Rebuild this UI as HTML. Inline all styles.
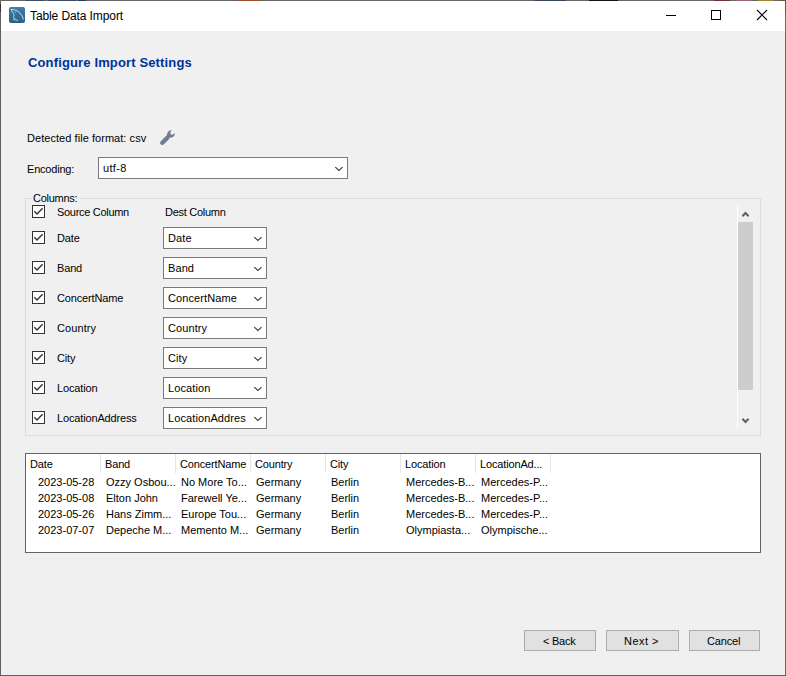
<!DOCTYPE html>
<html><head><meta charset="utf-8"><style>
html,body{margin:0;padding:0;width:786px;height:676px;overflow:hidden;background:#F0F0F0;}
body{position:relative;font-family:"Liberation Sans",sans-serif;font-size:11px;color:#000;}
.a{position:absolute;}
.t{position:absolute;white-space:nowrap;line-height:13px;font-size:11px;letter-spacing:-0.15px;}
.d{letter-spacing:0px;}
.cb{position:absolute;width:13px;height:13px;}
.combo{position:absolute;background:#fff;border:1px solid #7A7A7A;box-sizing:border-box;overflow:hidden;}
.combo .v{position:absolute;left:4px;white-space:nowrap;line-height:13px;letter-spacing:0.1px;}
.chev{position:absolute;width:9px;height:5px;overflow:visible;}
.btn{position:absolute;top:630px;height:21px;background:#E1E1E1;border:1px solid #ADADAD;box-sizing:border-box;text-align:center;line-height:13px;}
.hd{position:absolute;top:454px;height:19px;border-right:1px solid #E5E5E5;box-sizing:border-box;}
</style></head><body>
<!-- window frame -->
<div class="a" style="left:0;top:0;width:1px;height:676px;background:#5B5F66"></div>
<div class="a" style="left:785px;top:0;width:1px;height:676px;background:#6A6A6A"></div>
<div class="a" style="left:0;top:675px;width:786px;height:1px;background:#5A5D62"></div>
<div class="a" style="left:0;top:0;width:786px;height:1px;background:#666666"></div>
<div class="a" style="left:26px;top:0;width:18px;height:1px;background:#3A4C64"></div>
<div class="a" style="left:48px;top:0;width:28px;height:1px;background:#3A4C64"></div>
<div class="a" style="left:78px;top:0;width:8px;height:1px;background:#1F3D62"></div>
<div class="a" style="left:237px;top:0;width:22px;height:1px;background:#9A4A24"></div>
<div class="a" style="left:535px;top:0;width:31px;height:1px;background:#34445C"></div>
<div class="a" style="left:589px;top:0;width:29px;height:1px;background:#111111"></div>
<div class="a" style="left:714px;top:0;width:16px;height:1px;background:#6A3434"></div>
<div class="a" style="left:737px;top:0;width:15px;height:1px;background:#A06080"></div>
<div class="a" style="left:758px;top:0;width:16px;height:1px;background:#A08428"></div>
<div class="a" style="left:0;top:4px;width:1px;height:8px;background:#3D2E33"></div>
<div class="a" style="left:780px;top:0;width:6px;height:1px;background:#5E5640"></div>
<div class="a" style="left:785px;top:0;width:1px;height:14px;background:#5E5640"></div>
<!-- title bar -->
<div class="a" style="left:1px;top:1px;width:784px;height:30px;background:#FFFFFF"></div>
<div class="a" style="left:9px;top:7px;width:16px;height:16px;border-radius:2px;background:linear-gradient(#3F7FAA,#2A5F86)"></div>
<svg class="a" style="left:9px;top:7px" width="16" height="16" viewBox="0 0 16 16"><g stroke="#D6E2EC" stroke-width="0.9" fill="none" stroke-linecap="round" stroke-linejoin="round"><path d="M2.3 2.5C5 2.2 8.5 3.6 11 6C12.6 7.8 13.8 10 14.4 12.3"/><path d="M2.3 2.5C2.6 3.6 3.2 4.6 3.8 5.6C4.6 7 5.2 8 5 9C4.6 10.2 4.5 11.5 5.2 12.8L5.6 13.3"/><path d="M5.4 12.6C5.9 11.7 6.4 11.5 6.7 12.3C7 13 7.8 13.3 8.5 13.4"/></g><circle cx="6.3" cy="5.3" r="0.55" fill="#C8D6E2"/></svg>
<div class="t" style="left:30px;top:9px;font-size:12px;line-height:14px;letter-spacing:-0.1px">Table Data Import</div>
<!-- window controls -->
<div class="a" style="left:666px;top:15px;width:10px;height:1px;background:#000"></div>
<div class="a" style="left:711px;top:10px;width:10px;height:10px;border:1px solid #000;box-sizing:border-box"></div>
<svg class="a" style="left:756px;top:9px" width="12" height="12" viewBox="0 0 12 12"><path d="M1 1L11 11M11 1L1 11" stroke="#000" stroke-width="1.1" fill="none"/></svg>
<!-- heading -->
<div class="t" style="left:28px;top:55px;font-size:13px;line-height:15px;font-weight:bold;color:#003399;letter-spacing:0.14px">Configure Import Settings</div>
<!-- detected format -->
<div class="t" style="left:27px;top:132px;letter-spacing:0.05px">Detected file format: csv</div>
<svg class="a" style="left:159px;top:129px" width="18" height="17" viewBox="0 0 18 17"><path d="M1.8 12.2L7 7C7.7 6.3 8.2 6 8.2 5C8.3 3 9.9 1.4 12.8 1.1L11.4 3.1C11.1 4.3 11.6 5.3 12.6 5.7C13.6 6 14.7 5.5 15.8 4.1C16.1 5.9 15.3 7.6 13.4 8.3C12 8.8 10.8 8.6 10.2 9.3L10 10.2L4.6 15.5C3.8 16.3 2.4 16.2 1.6 15.3C0.9 14.5 1 13 1.8 12.2Z" fill="#707D8C"/></svg>
<!-- encoding -->
<div class="t" style="left:27px;top:163px;letter-spacing:-0.2px">Encoding:</div>
<div class="combo" style="left:98px;top:157px;width:250px;height:22px"><div class="v" style="top:4px;letter-spacing:0.35px">utf-8</div>
<svg class="chev" style="left:236px;top:8px" viewBox="0 0 9 5"><path d="M0.3 1.1L3.9 4.4L7.6 1.1" stroke="#3C3C3C" stroke-width="1.15" fill="none"/></svg></div>


<!-- columns group -->
<div class="a" style="left:25px;top:198px;width:736px;height:238px;border:1px solid #DCDCDC;box-sizing:border-box"></div>
<div class="t" style="left:32px;top:192px;padding:0 3px 0 1px;background:#F0F0F0;letter-spacing:-0.28px">Columns:</div>
<svg class="cb" style="left:32px;top:205px" viewBox="0 0 13 13"><rect x="0.5" y="0.5" width="12" height="12" fill="#fff" stroke="#333"/><path d="M2.3 6.3L5 9L10.6 3.3" stroke="#333" stroke-width="1.4" fill="none"/></svg>
<div class="t" style="left:57px;top:206px;letter-spacing:-0.3px">Source Column</div>
<div class="t" style="left:165px;top:206px;letter-spacing:-0.28px">Dest Column</div>
<svg class="cb" style="left:32px;top:231px" viewBox="0 0 13 13"><rect x="0.5" y="0.5" width="12" height="12" fill="#fff" stroke="#333"/><path d="M2.3 6.3L5 9L10.6 3.3" stroke="#333" stroke-width="1.4" fill="none"/></svg>
<div class="t" style="left:57px;top:232px">Date</div>
<div class="combo" style="left:163px;top:227px;width:104px;height:22px"><div class="v" style="top:4px">Date</div><svg class="chev" style="left:90px;top:8px" viewBox="0 0 9 5"><path d="M0.3 1.1L3.9 4.4L7.6 1.1" stroke="#3C3C3C" stroke-width="1.15" fill="none"/></svg></div>
<svg class="cb" style="left:32px;top:261px" viewBox="0 0 13 13"><rect x="0.5" y="0.5" width="12" height="12" fill="#fff" stroke="#333"/><path d="M2.3 6.3L5 9L10.6 3.3" stroke="#333" stroke-width="1.4" fill="none"/></svg>
<div class="t" style="left:57px;top:262px">Band</div>
<div class="combo" style="left:163px;top:257px;width:104px;height:22px"><div class="v" style="top:4px">Band</div><svg class="chev" style="left:90px;top:8px" viewBox="0 0 9 5"><path d="M0.3 1.1L3.9 4.4L7.6 1.1" stroke="#3C3C3C" stroke-width="1.15" fill="none"/></svg></div>
<svg class="cb" style="left:32px;top:291px" viewBox="0 0 13 13"><rect x="0.5" y="0.5" width="12" height="12" fill="#fff" stroke="#333"/><path d="M2.3 6.3L5 9L10.6 3.3" stroke="#333" stroke-width="1.4" fill="none"/></svg>
<div class="t" style="left:57px;top:292px">ConcertName</div>
<div class="combo" style="left:163px;top:287px;width:104px;height:22px"><div class="v" style="top:4px">ConcertName</div><svg class="chev" style="left:90px;top:8px" viewBox="0 0 9 5"><path d="M0.3 1.1L3.9 4.4L7.6 1.1" stroke="#3C3C3C" stroke-width="1.15" fill="none"/></svg></div>
<svg class="cb" style="left:32px;top:321px" viewBox="0 0 13 13"><rect x="0.5" y="0.5" width="12" height="12" fill="#fff" stroke="#333"/><path d="M2.3 6.3L5 9L10.6 3.3" stroke="#333" stroke-width="1.4" fill="none"/></svg>
<div class="t" style="left:57px;top:322px;letter-spacing:0.1px">Country</div>
<div class="combo" style="left:163px;top:317px;width:104px;height:22px"><div class="v" style="top:4px">Country</div><svg class="chev" style="left:90px;top:8px" viewBox="0 0 9 5"><path d="M0.3 1.1L3.9 4.4L7.6 1.1" stroke="#3C3C3C" stroke-width="1.15" fill="none"/></svg></div>
<svg class="cb" style="left:32px;top:351px" viewBox="0 0 13 13"><rect x="0.5" y="0.5" width="12" height="12" fill="#fff" stroke="#333"/><path d="M2.3 6.3L5 9L10.6 3.3" stroke="#333" stroke-width="1.4" fill="none"/></svg>
<div class="t" style="left:57px;top:352px">City</div>
<div class="combo" style="left:163px;top:347px;width:104px;height:22px"><div class="v" style="top:4px">City</div><svg class="chev" style="left:90px;top:8px" viewBox="0 0 9 5"><path d="M0.3 1.1L3.9 4.4L7.6 1.1" stroke="#3C3C3C" stroke-width="1.15" fill="none"/></svg></div>
<svg class="cb" style="left:32px;top:381px" viewBox="0 0 13 13"><rect x="0.5" y="0.5" width="12" height="12" fill="#fff" stroke="#333"/><path d="M2.3 6.3L5 9L10.6 3.3" stroke="#333" stroke-width="1.4" fill="none"/></svg>
<div class="t" style="left:57px;top:382px">Location</div>
<div class="combo" style="left:163px;top:377px;width:104px;height:22px"><div class="v" style="top:4px">Location</div><svg class="chev" style="left:90px;top:8px" viewBox="0 0 9 5"><path d="M0.3 1.1L3.9 4.4L7.6 1.1" stroke="#3C3C3C" stroke-width="1.15" fill="none"/></svg></div>
<svg class="cb" style="left:32px;top:411px" viewBox="0 0 13 13"><rect x="0.5" y="0.5" width="12" height="12" fill="#fff" stroke="#333"/><path d="M2.3 6.3L5 9L10.6 3.3" stroke="#333" stroke-width="1.4" fill="none"/></svg>
<div class="t" style="left:57px;top:412px">LocationAddress</div>
<div class="combo" style="left:163px;top:407px;width:104px;height:22px"><div class="v" style="top:4px;width:80px;overflow:hidden">LocationAddres</div><svg class="chev" style="left:90px;top:8px" viewBox="0 0 9 5"><path d="M0.3 1.1L3.9 4.4L7.6 1.1" stroke="#3C3C3C" stroke-width="1.15" fill="none"/></svg></div>
<!-- scrollbar -->
<div class="a" style="left:737px;top:205px;width:1px;height:224px;background:#FFFFFF"></div>
<div class="a" style="left:738px;top:222px;width:15px;height:168px;background:#CDCDCD"></div>
<svg class="a" style="left:741px;top:210px" width="9" height="8" viewBox="0 0 9 8"><path d="M1.4 6.2L4.5 3L7.6 6.2" stroke="#606060" stroke-width="2" fill="none"/></svg>
<svg class="a" style="left:741px;top:417px" width="9" height="8" viewBox="0 0 9 8"><path d="M1.4 1.8L4.5 5L7.6 1.8" stroke="#606060" stroke-width="2" fill="none"/></svg>
<!-- table -->
<div class="a" style="left:25px;top:453px;width:736px;height:100px;background:#fff;border:1px solid #646464;box-sizing:border-box"></div>
<div class="hd" style="left:26px;width:75px"></div>
<div class="t" style="left:30px;top:458px">Date</div>
<div class="hd" style="left:101px;width:75px"></div>
<div class="t" style="left:105px;top:458px">Band</div>
<div class="hd" style="left:176px;width:75px"></div>
<div class="t" style="left:180px;top:458px">ConcertName</div>
<div class="hd" style="left:251px;width:75px"></div>
<div class="t" style="left:255px;top:458px">Country</div>
<div class="hd" style="left:326px;width:75px"></div>
<div class="t" style="left:330px;top:458px">City</div>
<div class="hd" style="left:401px;width:75px"></div>
<div class="t" style="left:405px;top:458px">Location</div>
<div class="hd" style="left:476px;width:75px"></div>
<div class="t" style="left:480px;top:458px">LocationAd...</div>
<div class="t d" style="left:38px;top:476px">2023-05-28</div>
<div class="t d" style="left:106px;top:476px">Ozzy Osbou...</div>
<div class="t d" style="left:181px;top:476px">No More To...</div>
<div class="t d" style="left:256px;top:476px">Germany</div>
<div class="t d" style="left:331px;top:476px">Berlin</div>
<div class="t d" style="left:406px;top:476px">Mercedes-B...</div>
<div class="t d" style="left:481px;top:476px">Mercedes-P...</div>
<div class="t d" style="left:38px;top:492px">2023-05-08</div>
<div class="t d" style="left:106px;top:492px">Elton John</div>
<div class="t d" style="left:181px;top:492px">Farewell Ye...</div>
<div class="t d" style="left:256px;top:492px">Germany</div>
<div class="t d" style="left:331px;top:492px">Berlin</div>
<div class="t d" style="left:406px;top:492px">Mercedes-B...</div>
<div class="t d" style="left:481px;top:492px">Mercedes-P...</div>
<div class="t d" style="left:38px;top:508px">2023-05-26</div>
<div class="t d" style="left:106px;top:508px">Hans Zimm...</div>
<div class="t d" style="left:181px;top:508px">Europe Tou...</div>
<div class="t d" style="left:256px;top:508px">Germany</div>
<div class="t d" style="left:331px;top:508px">Berlin</div>
<div class="t d" style="left:406px;top:508px">Mercedes-B...</div>
<div class="t d" style="left:481px;top:508px">Mercedes-P...</div>
<div class="t d" style="left:38px;top:524px">2023-07-07</div>
<div class="t d" style="left:106px;top:524px">Depeche M...</div>
<div class="t d" style="left:181px;top:524px">Memento M...</div>
<div class="t d" style="left:256px;top:524px">Germany</div>
<div class="t d" style="left:331px;top:524px">Berlin</div>
<div class="t d" style="left:406px;top:524px">Olympiasta...</div>
<div class="t d" style="left:481px;top:524px">Olympische...</div>
<!-- buttons -->
<div class="btn" style="left:524px;width:72px"></div><div class="t" style="left:543px;top:635px;letter-spacing:-0.25px">&lt; Back</div>
<div class="btn" style="left:606px;width:73px"></div><div class="t" style="left:624px;top:635px;letter-spacing:0.45px">Next &gt;</div>
<div class="btn" style="left:689px;width:71px"></div><div class="t" style="left:707px;top:635px;letter-spacing:-0.15px">Cancel</div>
</body></html>
